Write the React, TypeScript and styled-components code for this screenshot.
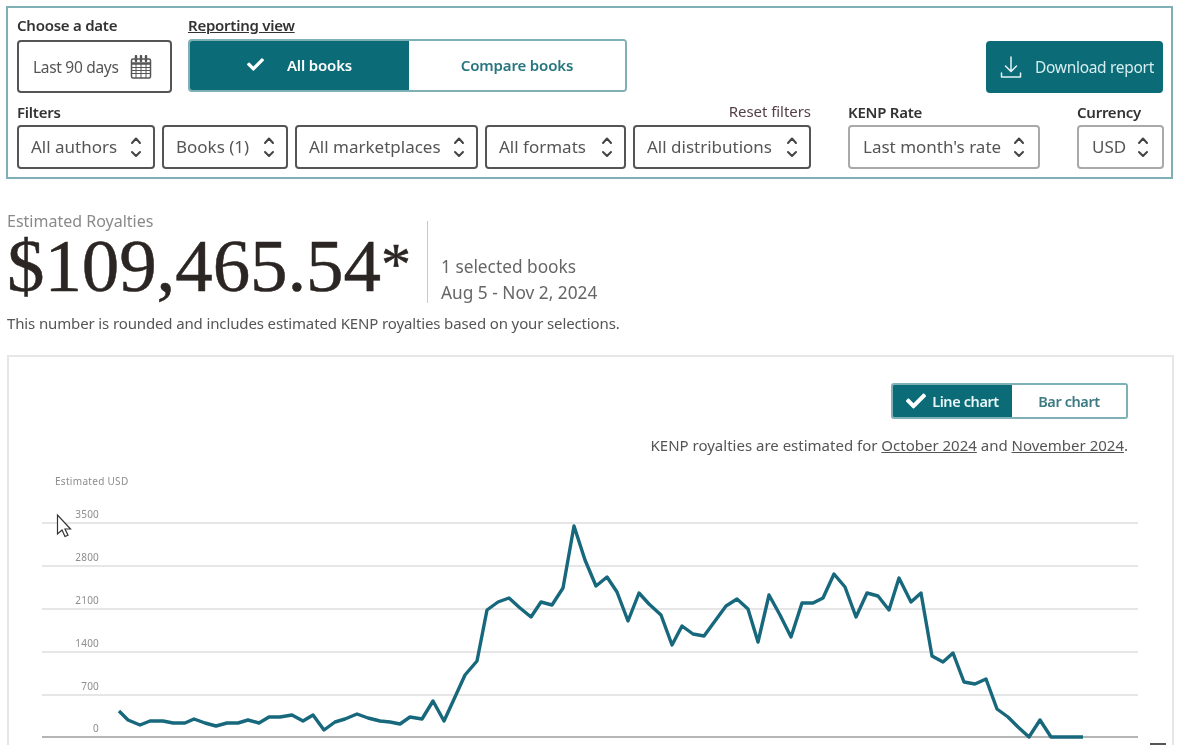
import styled, { createGlobalStyle } from "styled-components";
import { FaCheck } from "react-icons/fa";

const GlobalStyle = createGlobalStyle`
  html, body {
    margin: 0;
    padding: 0;
    background: #fff;
    overflow: hidden;
  }
  * {
    box-sizing: border-box;
  }
`;

const TEAL = "#0b6b77";
const SANS = `"Noto Sans", "Open Sans", sans-serif`;

// daily royalties traced as [x, y] in page pixels
const ROYALTIES: [number, number][] = [
  [119, 711], [128, 720], [140, 725], [150, 721], [163, 721], [173, 723], [185, 723], [194, 719],
  [205, 723], [216, 726], [227, 723], [238, 723], [248, 720], [259, 723], [269, 717], [280, 717],
  [292, 715], [303, 721], [313, 715], [324, 730], [335, 722], [345, 719], [357, 714], [368, 718],
  [380, 721], [390, 722], [400, 724], [410, 717], [422, 719], [433, 701], [444, 721], [455, 697],
  [465, 675], [477, 661], [487, 610], [498, 602], [509, 598], [520, 608], [531, 617], [541, 602],
  [552, 605], [563, 588], [574, 526], [585, 560], [596, 586], [607, 577], [617, 592], [628, 621],
  [639, 593], [649, 604], [661, 615], [672, 645], [682, 626], [693, 634], [704, 636], [715, 621],
  [726, 606], [737, 599], [748, 609], [758, 642], [769, 595], [780, 615], [791, 637], [802, 603],
  [813, 603], [823, 598], [834, 574], [845, 587], [856, 617], [867, 593], [878, 596], [889, 610],
  [899, 578], [911, 602], [921, 593], [932, 656], [943, 662], [953, 653], [964, 682], [975, 684],
  [986, 679], [997, 709], [1008, 717], [1018, 727], [1029, 737], [1040, 720], [1051, 737], [1083, 737],
];

const GRID: { label: string; y: number }[] = [
  { label: "3500", y: 523 },
  { label: "2800", y: 566 },
  { label: "2100", y: 609 },
  { label: "1400", y: 652 },
  { label: "700", y: 695 },
  { label: "0", y: 737 },
];

const FILTERS = [
  { label: "All authors", width: 138 },
  { label: "Books (1)", width: 126 },
  { label: "All marketplaces", width: 183 },
  { label: "All formats", width: 141 },
  { label: "All distributions", width: 178 },
];

const Page = styled.div`
  position: relative;
  width: 1185px;
  height: 745px;
  overflow: hidden;
  padding: 6px 12px 0 6px;
  font-family: ${SANS};
  color: #444;
  filter: blur(0.6px);
`;

const FilterPanel = styled.section`
  width: 1167px;
  height: 173px;
  border: 2px solid #7fb0b5;
  padding: 9px 8px 0 9px;
`;

const TopRow = styled.div`
  display: flex;
  align-items: flex-end;
  height: 76px;
`;

const Group = styled.div<{ $gapLeft?: number }>`
  display: flex;
  flex-direction: column;
  margin-left: ${(p) => p.$gapLeft ?? 0}px;
`;

const Label = styled.span`
  font-size: 15px;
  line-height: 20px;
  font-weight: 600;
  letter-spacing: -0.25px;
  color: #333;
  margin-bottom: 5px;
`;

const ViewLabel = styled(Label)`
  text-decoration: underline;
  margin-bottom: 4px;
`;

const FieldLabel = styled(Label)`
  margin-bottom: 3px;
`;

const DateButton = styled.button`
  display: flex;
  align-items: center;
  justify-content: space-between;
  width: 155px;
  height: 53px;
  padding: 0 18px 0 14px;
  background: #fff;
  border: 2px solid #555;
  border-radius: 4px;
  font: 400 15.5px ${SANS};
  letter-spacing: -0.3px;
  color: #555;
`;

const Segmented = styled.div`
  display: flex;
  width: 439px;
  height: 53px;
  margin-bottom: 1px;
  border: 2px solid #7fb0b5;
  border-radius: 4px;
  overflow: hidden;
`;

const Segment = styled.div<{ $active?: boolean; $size?: number }>`
  display: flex;
  align-items: center;
  justify-content: center;
  gap: 23px;
  height: 100%;
  width: ${(p) => p.$size}px;
  padding-bottom: 2px;
  background: ${(p) => (p.$active ? TEAL : "#fff")};
  color: ${(p) => (p.$active ? "#fff" : "#26757f")};
  font-size: 15px;
  font-weight: 600;
  letter-spacing: -0.15px;
`;

const DownloadButton = styled.button`
  display: flex;
  align-items: center;
  gap: 13px;
  width: 177px;
  height: 52px;
  margin-left: auto;
  padding: 0 0 0 14px;
  border: 0;
  border-radius: 4px;
  background: ${TEAL};
  color: #d5eef0;
  font: 400 15.5px ${SANS};
  letter-spacing: -0.3px;
  white-space: nowrap;
`;

const BottomRow = styled.div`
  display: flex;
  align-items: flex-end;
  margin-top: 9px;
`;

const LabelRow = styled.div`
  display: flex;
  justify-content: space-between;
  align-items: flex-start;
`;

const ResetLink = styled.span`
  font-size: 15px;
  line-height: 18px;
  letter-spacing: -0.05px;
  color: #553f46;
`;

const SelectRow = styled.div`
  display: flex;
  gap: 7px;
`;

const Select = styled.div<{ $size: number; $light?: boolean }>`
  display: flex;
  align-items: center;
  justify-content: space-between;
  width: ${(p) => p.$size}px;
  height: 44px;
  padding: 0 11px 1px 12px;
  border: 2px solid ${(p) => (p.$light ? "#a9a9a9" : "#555")};
  border-radius: 4px;
  font-size: 17px;
  color: #555;
  white-space: nowrap;
`;

const WideSelect = styled(Select)`
  padding: 0 13px 1px 13px;
`;

const Summary = styled.section`
  padding: 33px 0 0 1px;
`;

const SummaryLabel = styled.div`
  font-size: 16px;
  line-height: 18px;
  color: #8a8a8a;
`;

const SummaryRow = styled.div`
  display: flex;
  height: 73px;
`;

const Amount = styled.div`
  width: 420px;
  padding-top: 4px;
  font-family: "Liberation Serif", serif;
  font-size: 75px;
  line-height: 64px;
  letter-spacing: -0.1px;
  color: #2b2623;
  white-space: nowrap;
  -webkit-text-stroke: 0.5px #2b2623;
`;

const Asterisk = styled.span`
  font-size: 60px;
  line-height: 0;
  vertical-align: 7px;
`;

const Divider = styled.div`
  width: 1px;
  height: 82px;
  margin-top: -9px;
  background: #c9c9c9;
`;

const SummaryMeta = styled.div`
  display: flex;
  flex-direction: column;
  justify-content: flex-end;
  gap: 6px;
  padding: 0 0 0 13px;
  font-size: 17.3px;
  line-height: 20px;
  color: #666;
`;

const Caption = styled.p`
  margin: 11px 0 0;
  font-size: 15px;
  line-height: 18px;
  letter-spacing: -0.13px;
  color: #555;
`;

const ChartCard = styled.section`
  height: 420px;
  width: 1167px;
  margin: 23px 0 0 1px;
  border: 2px solid #e6e6e6;
`;

const ChartHeader = styled.div`
  display: flex;
  flex-direction: column;
  align-items: flex-end;
  padding: 26px 44px 0 0;
`;

const ChartToggle = styled.div`
  display: flex;
  width: 237px;
  height: 36px;
  border: 2px solid #7fb0b5;
  border-radius: 3px;
  overflow: hidden;
`;

const ToggleOption = styled.div<{ $active?: boolean; $size: number }>`
  display: flex;
  align-items: center;
  justify-content: center;
  gap: 6px;
  width: ${(p) => p.$size}px;
  padding-bottom: 1px;
  background: ${(p) => (p.$active ? TEAL : "#fff")};
  color: ${(p) => (p.$active ? "#e8f6f7" : "#3b7a83")};
  font-size: 14.5px;
  font-weight: 600;
  letter-spacing: -0.4px;
`;

const Note = styled.p`
  margin: 16px 0 0;
  font-size: 15px;
  line-height: 20px;
  color: #555;
  a {
    color: #555;
    text-decoration: underline;
  }
`;

const ChartSvg = styled.svg`
  display: block;
  margin-top: 14px;
  font-family: ${SANS};
`;

const Cursor = styled.svg`
  position: absolute;
  left: 56px;
  top: 513px;
`;

const CursorEdge = styled.div`
  position: absolute;
  left: 1150px;
  top: 743px;
  width: 16px;
  height: 2px;
  background: #555;
`;

const Updown = () => (
  <svg width="12" height="24" viewBox="0 0 12 24" fill="none" stroke="#444" strokeWidth="2" strokeLinecap="round" strokeLinejoin="round">
    <path d="M2 8 6 3.5 10 8" />
    <path d="M2 17 6 21 10 17" />
  </svg>
);

const CalendarIcon = () => (
  <svg width="22" height="24" viewBox="0 0 22 24" fill="none" stroke="#555">
    <rect x="1.5" y="4" width="19" height="19" rx="1.5" strokeWidth="1.5" />
    <path d="M1.5 8.5h19" strokeWidth="2.5" />
    <path d="M1.5 12.5h19M1.5 15.5h19M1.5 18.5h19M6 9v14M11 9v14M16 9v14" strokeWidth="1" />
    <path d="M6 1v5M11 1v5M16 1v5" strokeWidth="2.4" strokeLinecap="round" />
  </svg>
);

const DownloadIcon = () => (
  <svg width="22" height="24" viewBox="0 0 22 24" fill="none" stroke="#e4f4f5" strokeWidth="1.5" strokeLinecap="round" strokeLinejoin="round">
    <path d="M11 2v14M5.5 11 11 16.5 16.5 11" />
    <path d="M1.5 18v4h19v-4" />
  </svg>
);

const RoyaltyChart = () => (
  // viewBox is in page pixels so the traced points can be used as they are
  <ChartSvg width="1163" height="276" viewBox="9 469 1163 276">
    <text x="55" y="485" fontSize="10" fill="#8d8d8d" letterSpacing="0.3">
      Estimated USD
    </text>
    {GRID.map((line) => (
      <g key={line.label}>
        <text x="99" y={line.y - 5} textAnchor="end" fontSize="10" fill="#8d8d8d" letterSpacing="0.2">
          {line.label}
        </text>
        <line
          x1="42"
          x2="1138"
          y1={line.y}
          y2={line.y}
          stroke={line.y === 737 ? "#b5b5b5" : "#dedede"}
          strokeWidth={line.y === 737 ? 2 : 1.5}
        />
      </g>
    ))}
    <polyline
      points={ROYALTIES.map(([x, y]) => `${x},${y}`).join(" ")}
      fill="none"
      stroke="#17687c"
      strokeWidth="3.4"
      strokeLinejoin="round"
    />
  </ChartSvg>
);

export default function App() {
  return (
    <>
      <GlobalStyle />
      <Page>
        <FilterPanel>
          <TopRow>
            <Group>
              <Label>Choose a date</Label>
              <DateButton>
                Last 90 days
                <CalendarIcon />
              </DateButton>
            </Group>
            <Group $gapLeft={16}>
              <ViewLabel>Reporting view</ViewLabel>
              <Segmented>
                <Segment $active $size={219}>
                  <FaCheck size={17} color="#fff" />
                  All books
                </Segment>
                <Segment $size={216}>Compare books</Segment>
              </Segmented>
            </Group>
            <DownloadButton>
              <DownloadIcon />
              Download report
            </DownloadButton>
          </TopRow>
          <BottomRow>
            <Group>
              <LabelRow>
                <FieldLabel>Filters</FieldLabel>
                <ResetLink>Reset filters</ResetLink>
              </LabelRow>
              <SelectRow>
                {FILTERS.map((filter) => (
                  <Select key={filter.label} $size={filter.width}>
                    {filter.label}
                    <Updown />
                  </Select>
                ))}
              </SelectRow>
            </Group>
            <Group $gapLeft={37}>
              <FieldLabel>KENP Rate</FieldLabel>
              <WideSelect $size={192} $light>
                Last month's rate
                <Updown />
              </WideSelect>
            </Group>
            <Group $gapLeft={37}>
              <FieldLabel>Currency</FieldLabel>
              <WideSelect $size={87} $light>
                USD
                <Updown />
              </WideSelect>
            </Group>
          </BottomRow>
        </FilterPanel>

        <Summary>
          <SummaryLabel>Estimated Royalties</SummaryLabel>
          <SummaryRow>
            <Amount>
              $109,465.54<Asterisk>*</Asterisk>
            </Amount>
            <Divider />
            <SummaryMeta>
              <span>1 selected books</span>
              <span>Aug 5 - Nov 2, 2024</span>
            </SummaryMeta>
          </SummaryRow>
          <Caption>This number is rounded and includes estimated KENP royalties based on your selections.</Caption>
        </Summary>

        <ChartCard>
          <ChartHeader>
            <ChartToggle>
              <ToggleOption $active $size={119}>
                <FaCheck size={20} color="#fff" />
                Line chart
              </ToggleOption>
              <ToggleOption $size={114}>Bar chart</ToggleOption>
            </ChartToggle>
            <Note>
              KENP royalties are estimated for <a href="#oct">October 2024</a> and <a href="#nov">November 2024</a>.
            </Note>
          </ChartHeader>
          <RoyaltyChart />
        </ChartCard>

        <Cursor width="16" height="26" viewBox="0 0 16 26" fill="#fff" stroke="#333" strokeWidth="1.2">
          <path d="M1.5 2v19l4.5-4 3 6.5 3-1.3-3-6.2h5.5z" />
        </Cursor>
        <CursorEdge />
      </Page>
    </>
  );
}
